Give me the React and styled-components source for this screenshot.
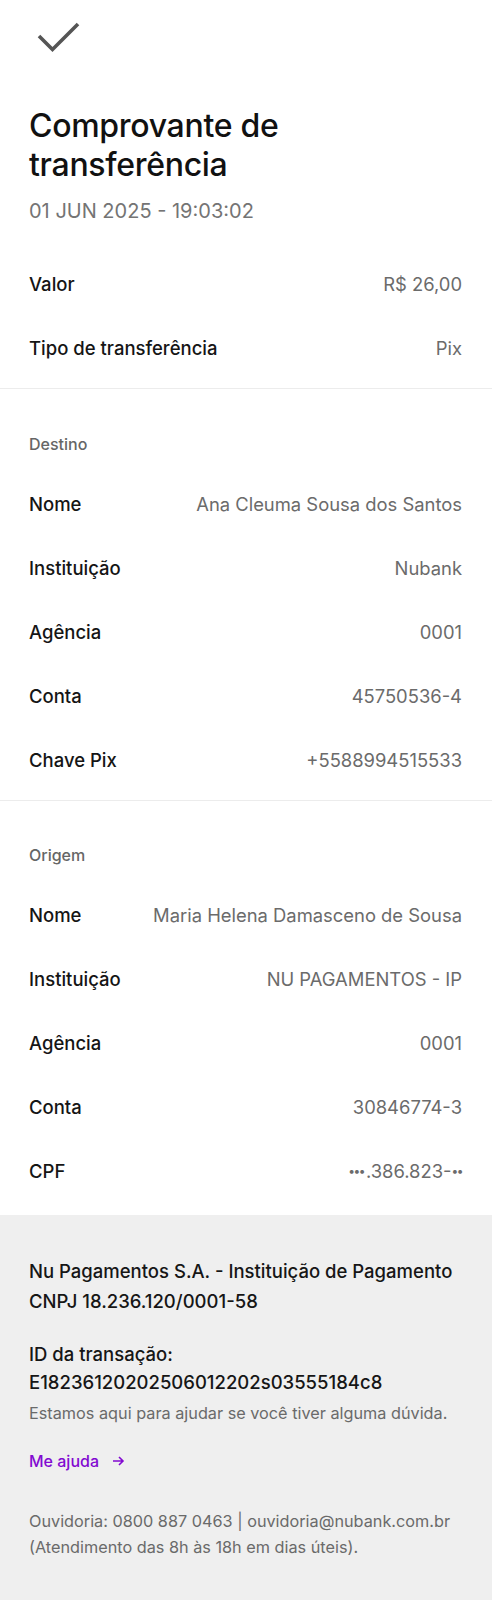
import styled, { createGlobalStyle } from "styled-components";

const GlobalStyle = createGlobalStyle`
	body {
		margin: 0;
		background: #ffffff;
		font-family: Inter, Roboto, "Liberation Sans", sans-serif;
		-webkit-font-smoothing: antialiased;
	}
`;

const Page = styled.div`
	width: 100%;
	min-height: 1600px;
	display: flex;
	flex-direction: column;
	background: #ffffff;
`;

const Header = styled.header`
	padding: 20px 30px 0 29px;
`;

const CloseButton = styled.button`
	border: none;
	background: none;
	padding: 0;
	margin-left: 6px;
	display: block;
	width: 46px;
	height: 36px;
	cursor: pointer;
`;

const Title = styled.h1`
	margin: 50px 0 0;
	font-size: 32px;
	line-height: 39px;
	font-weight: 500;
	color: #111111;
	letter-spacing: -0.3px;
`;

const DateText = styled.p`
	margin: 14px 0 0;
	font-size: 20px;
	line-height: 26px;
	color: #747474;
`;

const Section = styled.section`
	padding: ${(p) => p.$top || 0}px 30px ${(p) => p.$bottom || 0}px 29px;
	border-bottom: ${(p) => (p.$divider ? "1px solid #ececec" : "none")};
`;

const SectionTitle = styled.h2`
	margin: 0 0 18px;
	font-size: 16px;
	line-height: 20px;
	font-weight: 500;
	color: #666666;
`;

const Row = styled.div`
	height: 64px;
	display: flex;
	align-items: center;
	justify-content: space-between;
	gap: 16px;
`;

const Label = styled.span`
	font-size: 18.5px;
	font-weight: 500;
	color: #151515;
	white-space: nowrap;
`;

const Value = styled.span`
	font-size: 18.4px;
	color: #6b6b6b;
	text-align: right;
	white-space: nowrap;
`;

const Dots = styled.span`
	font-size: 12px;
	letter-spacing: -1.5px;
	vertical-align: 3px;
	margin-right: ${(p) => (p.$end ? 0 : 2)}px;
`;

const Footer = styled.footer`
	flex: 1;
	background: #efefef;
	padding: 41px 30px 40px 29px;
`;

const Strong = styled.p`
	margin: ${(p) => p.$mt || 0}px 0 0;
	font-size: 18.5px;
	line-height: ${(p) => p.$lh || 30}px;
	font-weight: 500;
	color: #161616;
`;

const Muted = styled.p`
	margin: ${(p) => p.$mt || 0}px 0 0;
	font-size: 16.25px;
	line-height: 26px;
	color: #6a6a6a;
`;

const HelpLink = styled.a`
	margin-top: 22px;
	display: inline-flex;
	align-items: center;
	gap: 12px;
	font-size: 16px;
	line-height: 26px;
	font-weight: 500;
	color: #820ad1;
	text-decoration: none;
`;

const destino = [
	["Nome", "Ana Cleuma Sousa dos Santos"],
	["Instituição", "Nubank"],
	["Agência", "0001"],
	["Conta", "45750536-4"],
	["Chave Pix", "+5588994515533"],
];

const origem = [
	["Nome", "Maria Helena Damasceno de Sousa"],
	["Instituição", "NU PAGAMENTOS - IP"],
	["Agência", "0001"],
	["Conta", "30846774-3"],
	[
		"CPF",
		<>
			<Dots>•••</Dots>.386.823-<Dots $end>••</Dots>
		</>,
	],
];

function Rows({ items }) {
	return items.map(([label, value]) => (
		<Row key={label}>
			<Label>{label}</Label>
			<Value>{value}</Value>
		</Row>
	));
}

function App() {
	return (
		<Page>
			<GlobalStyle />
			<Header>
				<CloseButton aria-label="Fechar">
					<svg width="46" height="36" viewBox="0 0 46 36" fill="none">
						<polyline
							points="4,16 17.5,29.5 43,4"
							stroke="#555555"
							strokeWidth="3.6"
							strokeLinecap="butt"
							strokeLinejoin="miter"
						/>
					</svg>
				</CloseButton>
				<Title>
					Comprovante de
					<br />
					transferência
				</Title>
				<DateText>01 JUN 2025 - 19:03:02</DateText>
			</Header>

			<Section $top={28} $bottom={8} $divider>
				<Row>
					<Label>Valor</Label>
					<Value>R$ 26,00</Value>
				</Row>
				<Row>
					<Label>Tipo de transferência</Label>
					<Value>Pix</Value>
				</Row>
			</Section>

			<Section $top={45} $bottom={8} $divider>
				<SectionTitle>Destino</SectionTitle>
				<Rows items={destino} />
			</Section>

			<Section $top={44} $bottom={12}>
				<SectionTitle>Origem</SectionTitle>
				<Rows items={origem} />
			</Section>

			<Footer>
				<Strong>
					Nu Pagamentos S.A. - Instituição de Pagamento
					<br />
					CNPJ 18.236.120/0001-58
				</Strong>
				<Strong $mt={24} $lh={28}>
					ID da transação:
					<br />
					E18236120202506012202s03555184c8
				</Strong>
				<Muted $mt={4}>Estamos aqui para ajudar se você tiver alguma dúvida.</Muted>
				<HelpLink href="#">
					Me ajuda
					<svg width="14" height="14" viewBox="0 0 14 14" fill="none">
						<path d="M2 7h10M8 3l4 4-4 4" stroke="#820ad1" strokeWidth="1.6" />
					</svg>
				</HelpLink>
				<Muted $mt={34}>
					Ouvidoria: 0800 887 0463 | ouvidoria@nubank.com.br
					<br />
					(Atendimento das 8h às 18h em dias úteis).
				</Muted>
			</Footer>
		</Page>
	);
}

export default App;
